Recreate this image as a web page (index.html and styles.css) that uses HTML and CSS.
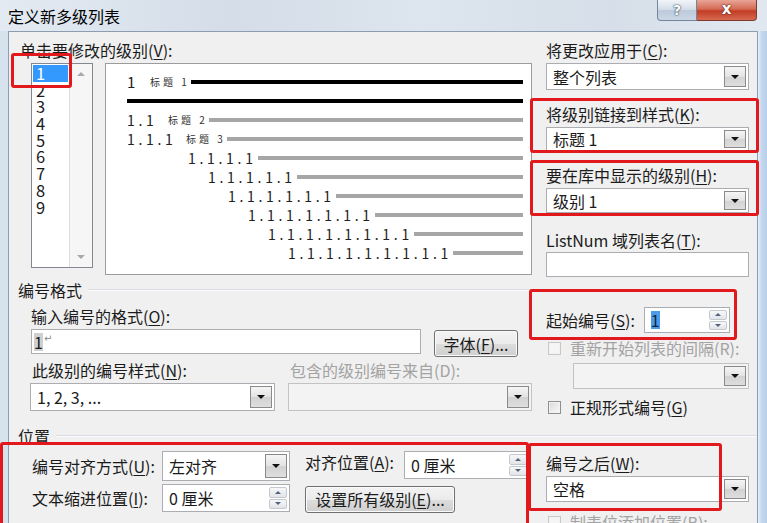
FILE: index.html
```html
<!DOCTYPE html>
<html lang="zh-CN">
<head>
    <meta charset="UTF-8">
    <title>定义新多级列表</title>
    <link rel="stylesheet" href="styles.css">
</head>
<body>
<div class="window">
    <div class="titlebar">
        <div class="titlebar__text">定义新多级列表</div>
        <div class="titlebar__help">?</div>
        <div class="titlebar__close">x</div>
    </div>
    <div class="frame">
        <div class="frame__left"></div>
        <div class="client">
            <div class="top">
                <!-- left column: levels, preview, number format -->
                <div class="col-left">
                    <div class="label label--v">单击要修改的级别(<u>V</u>):</div>
                    <div class="level-row">
                        <div class="listbox">
                            <div class="listbox__items">
                                <div class="listbox__item listbox__item--sel">1</div>
                                <div class="listbox__item">2</div>
                                <div class="listbox__item">3</div>
                                <div class="listbox__item">4</div>
                                <div class="listbox__item">5</div>
                                <div class="listbox__item">6</div>
                                <div class="listbox__item">7</div>
                                <div class="listbox__item">8</div>
                                <div class="listbox__item">9</div>
                            </div>
                            <div class="listbox__scroll">
                                <span class="arrow arrow--up"></span>
                                <span class="arrow arrow--down"></span>
                            </div>
                        </div>
                        <div class="preview">
                            <div class="pv-row"><span class="pv-num pv-num--1">1</span><span class="pv-head">标题 1</span><span class="pv-line pv-line--black"></span></div>
                            <div class="pv-row"><span class="pv-line pv-line--black"></span></div>
                            <div class="pv-row"><span class="pv-num pv-num--2">1.1</span><span class="pv-head">标题 2</span><span class="pv-line"></span></div>
                            <div class="pv-row"><span class="pv-num pv-num--3">1.1.1</span><span class="pv-head">标题 3</span><span class="pv-line"></span></div>
                            <div class="pv-row pv-row--4"><span class="pv-num">1.1.1.1</span><span class="pv-line"></span></div>
                            <div class="pv-row pv-row--5"><span class="pv-num">1.1.1.1.1</span><span class="pv-line"></span></div>
                            <div class="pv-row pv-row--6"><span class="pv-num">1.1.1.1.1.1</span><span class="pv-line"></span></div>
                            <div class="pv-row pv-row--7"><span class="pv-num">1.1.1.1.1.1.1</span><span class="pv-line"></span></div>
                            <div class="pv-row pv-row--8"><span class="pv-num">1.1.1.1.1.1.1.1</span><span class="pv-line"></span></div>
                            <div class="pv-row pv-row--9"><span class="pv-num">1.1.1.1.1.1.1.1.1</span><span class="pv-line"></span></div>
                        </div>
                    </div>

                    <div class="group">编号格式</div>
                    <div class="label label--o">输入编号的格式(<u>O</u>):</div>
                    <div class="fmt-row">
                        <div class="textbox textbox--fmt"><span class="sel-grey">1</span><span class="ret">↵</span></div>
                        <div class="btn btn--font">字体(<u>F</u>)...</div>
                    </div>
                    <div class="style-labels">
                        <div class="label label--n">此级别的编号样式(<u>N</u>):</div>
                        <div class="label label--d label--off">包含的级别编号来自(D):</div>
                    </div>
                    <div class="style-row">
                        <div class="combo combo--n"><span class="combo__text">1, 2, 3, ...</span><span class="combo__btn"></span></div>
                        <div class="combo combo--off combo--d"><span class="combo__text"></span><span class="combo__btn"></span></div>
                    </div>
                </div>

                <!-- right column -->
                <div class="col-right">
                    <div class="label label--c">将更改应用于(<u>C</u>):</div>
                    <div class="combo combo--c"><span class="combo__text">整个列表</span><span class="combo__btn"></span></div>
                    <div class="label label--k">将级别链接到样式(<u>K</u>):</div>
                    <div class="combo combo--k"><span class="combo__text">标题 1</span><span class="combo__btn"></span></div>
                    <div class="label label--h">要在库中显示的级别(<u>H</u>):</div>
                    <div class="combo combo--h"><span class="combo__text">级别 1</span><span class="combo__btn"></span></div>
                    <div class="label label--t">ListNum 域列表名(<u>T</u>):</div>
                    <div class="textbox textbox--t"></div>

                    <div class="start-row">
                        <div class="label">起始编号(<u>S</u>):</div>
                        <div class="spin spin--start">
                            <span class="spin__text"><span class="sel-blue">1</span></span>
                            <span class="spin__btns"><span class="spin__up"></span><span class="spin__down"></span></span>
                        </div>
                    </div>
                    <div class="check-row check-row--r">
                        <span class="check check--off"></span>
                        <span class="label label--off">重新开始列表的间隔(R):</span>
                    </div>
                    <div class="combo combo--off combo--r"><span class="combo__text"></span><span class="combo__btn"></span></div>
                    <div class="check-row check-row--g">
                        <span class="check"></span>
                        <span class="label">正规形式编号(<u>G</u>)</span>
                    </div>
                </div>
            </div>

            <div class="group group--pos">位置</div>
            <div class="pos">
                <div class="pos__left">
                    <div class="label">编号对齐方式(<u>U</u>):</div>
                    <div class="combo combo--align"><span class="combo__text">左对齐</span><span class="combo__btn"></span></div>
                    <div class="label pos__label-a">对齐位置(<u>A</u>):</div>
                    <div class="spin spin--at">
                        <span class="spin__text">0 厘米</span>
                        <span class="spin__btns"><span class="spin__up"></span><span class="spin__down"></span></span>
                    </div>
                    <div class="label">文本缩进位置(<u>I</u>):</div>
                    <div class="spin spin--indent">
                        <span class="spin__text">0 厘米</span>
                        <span class="spin__btns"><span class="spin__up"></span><span class="spin__down"></span></span>
                    </div>
                    <div class="btn btn--all">设置所有级别(<u>E</u>)...</div>
                </div>
                <div class="pos__right">
                    <div class="label label--w">编号之后(<u>W</u>):</div>
                    <div class="combo combo--w"><span class="combo__text">空格</span><span class="combo__btn"></span></div>
                    <div class="check-row check-row--b">
                        <span class="check check--off"></span>
                        <span class="label label--off">制表位添加位置(B):</span>
                    </div>
                </div>
            </div>
        </div>
        <div class="frame__right"></div>
    </div>

    <!-- red annotation boxes -->
    <div class="mark mark--level"></div>
    <div class="mark mark--link"></div>
    <div class="mark mark--gallery"></div>
    <div class="mark mark--start"></div>
    <div class="mark mark--pos"></div>
    <div class="mark mark--after"></div>
</div>
</body>
</html>
```

FILE: styles.css
```css
* {
    box-sizing: border-box;
}

body {
    margin: 0;
    font-family: "Noto Sans CJK SC", "Noto Sans", sans-serif;
    font-size: 16px;
    color: #1b1b1b;
}

u {
    text-underline-offset: 2px;
}

.window {
    position: relative;
    width: 767px;
    height: 523px;
    overflow: hidden;
    background: linear-gradient(#dfe8f1, #d3dfeb);
}

/* title bar */
.titlebar {
    display: flex;
    height: 31px;
    background: linear-gradient(90deg, #e3eaf2 0%, #d4dde8 30%, #dde5ee 55%, #d6dfe9 80%, #e1e8f0 100%);
}

.titlebar__text {
    flex: 1;
    padding: 5px 0 0 8px;
    line-height: 22px;
    color: #000;
}

.titlebar__help {
    width: 40px;
    height: 21px;
    border: 1px solid #74859b;
    border-top: 0;
    border-radius: 0 0 0 4px;
    background: linear-gradient(#f1f5f9, #d3dde8 48%, #bccadb 52%, #cbd7e4);
    color: #fff;
    font: bold 14px "DejaVu Sans", sans-serif;
    line-height: 20px;
    text-align: center;
    text-shadow: 0 0 2px #2c3e58, 0 0 1px #2c3e58;
}

.titlebar__close {
    width: 60px;
    height: 21px;
    margin-right: 10px;
    border: 1px solid #7d3a30;
    border-top: 0;
    border-left: 0;
    border-radius: 0 0 4px 0;
    background: linear-gradient(#e7a596, #d56b55 45%, #c23d26 55%, #d7694f);
    color: #fff;
    font: bold 15px "DejaVu Sans", sans-serif;
    line-height: 19px;
    text-align: center;
    text-shadow: 0 0 2px #5a1a10, 0 0 1px #5a1a10;
}

.frame {
    display: flex;
    height: 492px;
}

.frame__left {
    width: 8px;
    background: #d6e2ee;
}

.frame__right {
    flex: 1;
    background: linear-gradient(90deg, #e9f1f9, #c4d8ee 40%, #b9d0ea);
}

.client {
    width: 750px;
    border: 1px solid #8d9cb0;
    border-bottom: 0;
    background: #f0f0f0;
}

.label {
    line-height: 20px;
    white-space: nowrap;
}

.label--off {
    color: #a3a3a3;
}

.top {
    display: flex;
}

/* left column */
.col-left {
    width: 523px;
}

.label--v {
    margin: 8px 0 0 11px;
}

.level-row {
    display: flex;
    margin: 3px 0 0 22px;
}

.listbox {
    display: flex;
    width: 62px;
    height: 205px;
    border: 1px solid #828790;
    background: #fff;
}

.listbox__items {
    flex: 1;
    padding: 1px 1px 0 1px;
}

.listbox__item {
    height: 16.7px;
    font-size: 16.5px;
    line-height: 16.7px;
    padding-left: 3px;
}

.listbox__item--sel {
    background: #3399ff;
    color: #fff;
}

.listbox__scroll {
    display: flex;
    flex-direction: column;
    justify-content: space-between;
    align-items: center;
    width: 23px;
    padding: 8px 0 8px;
    border-left: 1px solid #dcdcdc;
    background: #f6f6f6;
}

.arrow {
    width: 0;
    height: 0;
    border-left: 4px solid transparent;
    border-right: 4px solid transparent;
}

.arrow--up {
    border-bottom: 4px solid #a9a9a9;
}

.arrow--down {
    border-top: 4px solid #a9a9a9;
}

.preview {
    width: 427px;
    height: 212px;
    margin-left: 12px;
    padding: 8px 8px 0 21px;
    border: 1px solid #9c9c9c;
    background: #fff;
}

.pv-row {
    display: flex;
    align-items: center;
    height: 19px;
}

.pv-row--4 { padding-left: 61px; }
.pv-row--5 { padding-left: 81px; }
.pv-row--6 { padding-left: 101px; }
.pv-row--7 { padding-left: 121px; }
.pv-row--8 { padding-left: 141px; }
.pv-row--9 { padding-left: 161px; }

.pv-num {
    font-size: 14px;
    letter-spacing: 3.7px;
    color: #222;
    white-space: nowrap;
}

.pv-num--1 { width: 23px; font-size: 15px; }
.pv-num--2 { width: 41px; }
.pv-num--3 { width: 59px; }

.pv-head {
    font-size: 10px;
    letter-spacing: 3px;
    color: #333;
    white-space: nowrap;
}

.pv-line {
    flex: 1;
    height: 4px;
    margin-left: 1px;
    background: #a6a6a6;
}

.pv-line--black {
    background: #000;
}

.pv-row:nth-child(2) .pv-line {
    margin-left: 0;
}

/* group headers */
.group {
    display: flex;
    align-items: center;
    margin-top: 5px;
    padding-left: 9px;
    line-height: 20px;
}

.group::after {
    content: "";
    flex: 1;
    margin-left: 6px;
    border-top: 1px solid #d8dde3;
    border-bottom: 1px solid #fbfbfb;
}

.group--pos {
    margin-top: 10px;
}

.label--o {
    margin: 6px 0 0 22px;
}

.fmt-row {
    display: flex;
    align-items: flex-start;
    margin: 3px 0 0 22px;
}

.textbox {
    border: 1px solid #abadb3;
    background: #fff;
}

.textbox--fmt {
    display: flex;
    align-items: center;
    width: 390px;
    height: 25px;
    padding-left: 2px;
}

.sel-grey {
    background: #cfcfcf;
    line-height: 18px;
}

.ret {
    font: 10px "DejaVu Sans", sans-serif;
    color: #8a8a8a;
    margin: -6px 0 0 1px;
}

.btn {
    display: flex;
    align-items: center;
    justify-content: center;
    border: 1px solid #707070;
    border-radius: 3px;
    background: linear-gradient(#f3f3f3 0%, #ebebeb 50%, #dddddd 51%, #cfcfcf 100%);
    box-shadow: inset 0 0 0 1px #fbfbfb;
    white-space: nowrap;
}

.btn--font {
    width: 84px;
    height: 27px;
    margin: 1px 0 0 13px;
}

.style-labels {
    display: flex;
    margin-top: 3px;
}

.label--n {
    width: 281px;
    padding-left: 23px;
}

.label--d {
    padding-left: 0;
}

.style-row {
    display: flex;
    margin: 3px 0 0 21px;
}

/* combo boxes */
.combo {
    display: flex;
    align-items: center;
    padding: 2px;
    border: 1px solid #abadb3;
    background: #fff;
}

.combo__text {
    flex: 1;
    padding-left: 4px;
    white-space: nowrap;
}

.combo__btn {
    display: flex;
    align-items: center;
    justify-content: center;
    width: 22px;
    align-self: stretch;
    border: 1px solid #8a8a8a;
    background: linear-gradient(#f5f5f5, #e3e3e3 50%, #d2d2d2 51%, #dedede);
}

.combo__btn::after {
    content: "";
    border-left: 4px solid transparent;
    border-right: 4px solid transparent;
    border-top: 4px solid #111;
}

.combo--off {
    border-color: #c3c3c3;
    background: #f3f3f3;
}

.combo--n {
    width: 245px;
    height: 28px;
}

.combo--d {
    width: 244px;
    height: 28px;
    margin-left: 13px;
}

/* right column */
.col-right {
    flex: 1;
    padding-left: 14px;
}

.combo--c,
.combo--k,
.combo--h,
.textbox--t {
    width: 203px;
}

.label--c {
    margin-top: 8px;
}

.combo--c {
    height: 27px;
    margin-top: 3px;
}

.label--k {
    margin-top: 14px;
}

.combo--k {
    height: 24px;
    margin-top: 3px;
}

.label--h {
    margin-top: 14px;
}

.combo--h {
    height: 25px;
    margin-top: 3px;
}

.label--t {
    margin-top: 17px;
}

.textbox--t {
    height: 25px;
    margin-top: 2px;
}

.start-row {
    display: flex;
    align-items: center;
    margin-top: 30px;
}

.spin {
    display: flex;
    padding: 2px;
    border: 1px solid #abadb3;
    background: #fff;
}

.spin__text {
    display: flex;
    align-items: center;
    flex: 1;
    padding-left: 4px;
    white-space: nowrap;
}

.spin__btns {
    display: flex;
    flex-direction: column;
    gap: 1px;
    width: 18px;
}

.spin__btns span {
    display: flex;
    align-items: center;
    justify-content: center;
    flex: 1;
    border: 1px solid #c4c9d1;
    border-radius: 2px;
    background: linear-gradient(#f7f7f7, #e2e4e8);
}

.spin__up::after {
    content: "";
    border-left: 3px solid transparent;
    border-right: 3px solid transparent;
    border-bottom: 3px solid #50637e;
}

.spin__down::after {
    content: "";
    border-left: 3px solid transparent;
    border-right: 3px solid transparent;
    border-top: 3px solid #50637e;
}

.spin--start {
    width: 86px;
    height: 26px;
    margin-left: 9px;
}

.sel-blue {
    background: #4c9be8;
    color: #10223f;
    line-height: 18px;
}

.check-row {
    display: flex;
    align-items: center;
    gap: 9px;
    height: 18px;
    padding-left: 2px;
}

.check {
    width: 13px;
    height: 13px;
    border: 1px solid #8e8f8f;
    background: linear-gradient(135deg, #d8d8d8, #fbfbfb);
    box-shadow: inset 0 0 0 1px #f2f2f2;
}

.check--off {
    border-color: #c8c8c8;
    background: #f5f5f5;
}

.check-row--r {
    margin-top: 6px;
}

.combo--r {
    width: 176px;
    height: 26px;
    margin: 6px 0 0 27px;
}

.check-row--g {
    margin-top: 9px;
}

/* position section */
.pos {
    display: flex;
}

.pos__left {
    display: grid;
    grid-template-columns: 130px 128px 114px 126px;
    grid-template-rows: 30px 28px;
    row-gap: 3px;
    align-items: center;
    width: 523px;
    margin-top: 5px;
    padding-left: 23px;
}

.combo--align {
    height: 30px;
}

.pos__label-a {
    padding-left: 15px;
    align-self: start;
    margin-top: 1px;
}

.spin--at {
    height: 28px;
    align-self: start;
}

.spin--indent {
    height: 28px;
}

.btn--all {
    grid-column: 3 / span 2;
    width: 150px;
    height: 27px;
    margin: 2px 0 0 15px;
}

.pos__right {
    flex: 1;
    padding-left: 14px;
}

.label--w {
    margin-top: 7px;
}

.combo--w {
    width: 203px;
    height: 26px;
    margin-top: 3px;
}

.check-row--b {
    margin-top: 11px;
}

/* red annotation boxes */
.mark {
    position: absolute;
    border: 3px solid #e2191c;
    border-radius: 3px;
}

.mark--level { left: 11px; top: 53px; width: 61px; height: 35px; }
.mark--link { left: 530px; top: 98px; width: 229px; height: 55px; }
.mark--gallery { left: 530px; top: 160px; width: 229px; height: 56px; }
.mark--start { left: 529px; top: 289px; width: 208px; height: 51px; }
.mark--pos { left: 0; top: 442px; width: 529px; height: 100px; }
.mark--after { left: 528px; top: 443px; width: 194px; height: 68px; }
```
